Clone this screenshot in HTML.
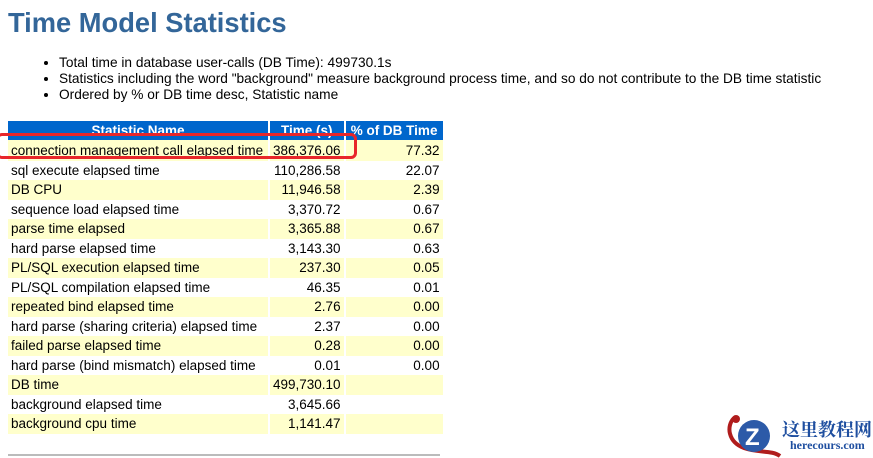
<!DOCTYPE html>
<html><head><meta charset="utf-8"><style>
body{margin:0;width:873px;height:458px;background:#fff;font-family:"Liberation Sans",Arial,sans-serif;position:relative;overflow:hidden}
h1{position:absolute;left:8px;top:7px;margin:0;font-size:27.3px;color:#336699;font-weight:bold}
ul{position:absolute;left:59px;top:55px;margin:0;padding:0;font-size:13.7px;line-height:16px;color:#000}
li{list-style:disc}
table{position:absolute;left:8px;top:121px;border-collapse:separate;border-spacing:2px 0;font-size:13.5px;margin-left:-2px}
th{background:#0066CC;color:#fff;height:19px;padding:0 3px;font-weight:bold}
td{height:19.5px;padding:0 3px;white-space:nowrap}
tr:nth-child(2) td{padding-top:1px}
tr.y td{background:#FFFFCC}
td.n{text-align:right}
.box{position:absolute;left:-4px;top:133px;width:361px;height:26px;border:3px solid #e8262a;border-radius:6px;box-sizing:border-box}
.line{position:absolute;left:8px;top:454px;width:432px;height:2px;background:#bbb}
</style></head><body>
<h1>Time Model Statistics</h1>
<ul>
<li>Total time in database user-calls (DB Time): 499730.1s</li>
<li>Statistics including the word "background" measure background process time, and so do not contribute to the DB time statistic</li>
<li>Ordered by % or DB time desc, Statistic name</li>
</ul>
<table>
<tr><th style="width:254px">Statistic Name</th><th style="width:66px">Time (s)</th><th style="width:91px">% of DB Time</th></tr>
<tr class="y"><td>connection management call elapsed time</td><td class="n">386,376.06</td><td class="n">77.32</td></tr>
<tr><td>sql execute elapsed time</td><td class="n">110,286.58</td><td class="n">22.07</td></tr>
<tr class="y"><td>DB CPU</td><td class="n">11,946.58</td><td class="n">2.39</td></tr>
<tr><td>sequence load elapsed time</td><td class="n">3,370.72</td><td class="n">0.67</td></tr>
<tr class="y"><td>parse time elapsed</td><td class="n">3,365.88</td><td class="n">0.67</td></tr>
<tr><td>hard parse elapsed time</td><td class="n">3,143.30</td><td class="n">0.63</td></tr>
<tr class="y"><td>PL/SQL execution elapsed time</td><td class="n">237.30</td><td class="n">0.05</td></tr>
<tr><td>PL/SQL compilation elapsed time</td><td class="n">46.35</td><td class="n">0.01</td></tr>
<tr class="y"><td>repeated bind elapsed time</td><td class="n">2.76</td><td class="n">0.00</td></tr>
<tr><td>hard parse (sharing criteria) elapsed time</td><td class="n">2.37</td><td class="n">0.00</td></tr>
<tr class="y"><td>failed parse elapsed time</td><td class="n">0.28</td><td class="n">0.00</td></tr>
<tr><td>hard parse (bind mismatch) elapsed time</td><td class="n">0.01</td><td class="n">0.00</td></tr>
<tr class="y"><td>DB time</td><td class="n">499,730.10</td><td></td></tr>
<tr><td>background elapsed time</td><td class="n">3,645.66</td><td></td></tr>
<tr class="y"><td>background cpu time</td><td class="n">1,141.47</td><td></td></tr>
</table>
<div class="box"></div>
<div class="line"></div>
<svg style="position:absolute;left:724px;top:412px" width="60" height="46" viewBox="0 0 60 46">
<path d="M10 6 C2 14 4 30 20 36 C34 41 48 38 56 44" stroke="#b01c1c" stroke-width="4" fill="none"/>
<circle cx="12" cy="7" r="4" fill="#b01c1c"/>
<circle cx="30" cy="24" r="16" fill="#2c5aa8"/>
<text x="21" y="33" font-size="24" font-weight="bold" fill="#fff" font-family="Liberation Sans,sans-serif">Z</text>
</svg>
<div style="position:absolute;left:782px;top:416px;font-family:'Liberation Serif','Noto Serif CJK SC',serif;font-size:18px;font-weight:bold;color:#1f4fa0">这里教程网</div>
<div style="position:absolute;left:790px;top:438px;font-family:'Liberation Serif',serif;font-size:12px;font-weight:bold;color:#1f4fa0">herecours.com</div>
</body></html>
